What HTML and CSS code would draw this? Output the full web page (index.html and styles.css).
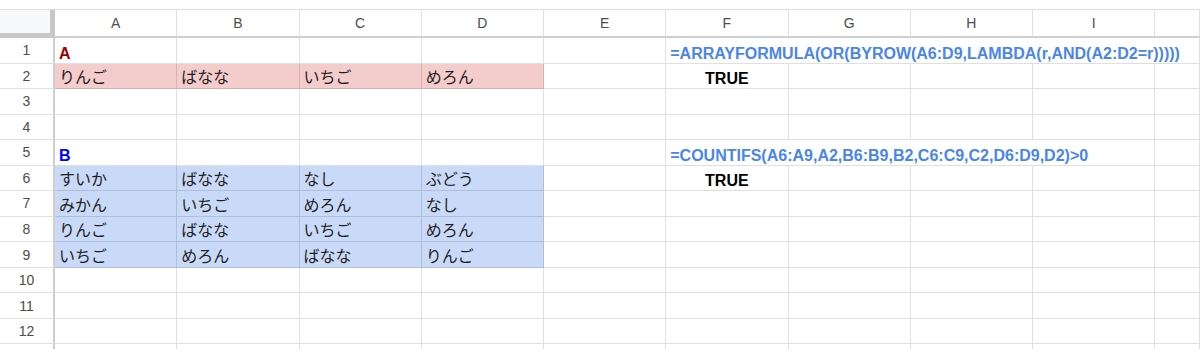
FILE: index.html
```html
<!DOCTYPE html>
<html lang="ja">
<head>
<meta charset="utf-8">
<title>Sheet</title>
<link rel="stylesheet" href="styles.css">
</head>
<body>
<div class="sheet">
  <div class="row head">
    <div class="corner"></div>
    <div class="col">A</div><div class="col">B</div><div class="col">C</div><div class="col">D</div><div class="col">E</div>
    <div class="col">F</div><div class="col">G</div><div class="col">H</div><div class="col">I</div><div class="col"></div>
  </div>
  <div class="row">
    <div class="num">1</div>
    <div class="cell"><span class="lbl red">A</span></div><div class="cell"></div><div class="cell"></div><div class="cell"></div><div class="cell"></div>
    <div class="cell span5"><span class="formula">=ARRAYFORMULA(OR(BYROW(A6:D9,LAMBDA(r,AND(A2:D2=r)))))</span></div>
  </div>
  <div class="row">
    <div class="num">2</div>
    <div class="cell pink">りんご</div><div class="cell pink">ばなな</div><div class="cell pink">いちご</div><div class="cell pink">めろん</div><div class="cell"></div>
    <div class="cell bool">TRUE</div><div class="cell"></div><div class="cell"></div><div class="cell"></div><div class="cell"></div>
  </div>
  <div class="row">
    <div class="num">3</div>
    <div class="cell"></div><div class="cell"></div><div class="cell"></div><div class="cell"></div><div class="cell"></div>
    <div class="cell"></div><div class="cell"></div><div class="cell"></div><div class="cell"></div><div class="cell"></div>
  </div>
  <div class="row">
    <div class="num">4</div>
    <div class="cell"></div><div class="cell"></div><div class="cell"></div><div class="cell"></div><div class="cell"></div>
    <div class="cell"></div><div class="cell"></div><div class="cell"></div><div class="cell"></div><div class="cell"></div>
  </div>
  <div class="row">
    <div class="num">5</div>
    <div class="cell"><span class="lbl blue">B</span></div><div class="cell"></div><div class="cell"></div><div class="cell"></div><div class="cell"></div>
    <div class="cell span4"><span class="formula">=COUNTIFS(A6:A9,A2,B6:B9,B2,C6:C9,C2,D6:D9,D2)&gt;0</span></div><div class="cell"></div>
  </div>
  <div class="row">
    <div class="num">6</div>
    <div class="cell blue-fill">すいか</div><div class="cell blue-fill">ばなな</div><div class="cell blue-fill">なし</div><div class="cell blue-fill">ぶどう</div><div class="cell"></div>
    <div class="cell bool">TRUE</div><div class="cell"></div><div class="cell"></div><div class="cell"></div><div class="cell"></div>
  </div>
  <div class="row">
    <div class="num">7</div>
    <div class="cell blue-fill">みかん</div><div class="cell blue-fill">いちご</div><div class="cell blue-fill">めろん</div><div class="cell blue-fill">なし</div><div class="cell"></div>
    <div class="cell"></div><div class="cell"></div><div class="cell"></div><div class="cell"></div><div class="cell"></div>
  </div>
  <div class="row">
    <div class="num">8</div>
    <div class="cell blue-fill">りんご</div><div class="cell blue-fill">ばなな</div><div class="cell blue-fill">いちご</div><div class="cell blue-fill">めろん</div><div class="cell"></div>
    <div class="cell"></div><div class="cell"></div><div class="cell"></div><div class="cell"></div><div class="cell"></div>
  </div>
  <div class="row">
    <div class="num">9</div>
    <div class="cell blue-fill">いちご</div><div class="cell blue-fill">めろん</div><div class="cell blue-fill">ばなな</div><div class="cell blue-fill">りんご</div><div class="cell"></div>
    <div class="cell"></div><div class="cell"></div><div class="cell"></div><div class="cell"></div><div class="cell"></div>
  </div>
  <div class="row">
    <div class="num">10</div>
    <div class="cell"></div><div class="cell"></div><div class="cell"></div><div class="cell"></div><div class="cell"></div>
    <div class="cell"></div><div class="cell"></div><div class="cell"></div><div class="cell"></div><div class="cell"></div>
  </div>
  <div class="row">
    <div class="num">11</div>
    <div class="cell"></div><div class="cell"></div><div class="cell"></div><div class="cell"></div><div class="cell"></div>
    <div class="cell"></div><div class="cell"></div><div class="cell"></div><div class="cell"></div><div class="cell"></div>
  </div>
  <div class="row">
    <div class="num">12</div>
    <div class="cell"></div><div class="cell"></div><div class="cell"></div><div class="cell"></div><div class="cell"></div>
    <div class="cell"></div><div class="cell"></div><div class="cell"></div><div class="cell"></div><div class="cell"></div>
  </div>
  <div class="row">
    <div class="num"></div>
    <div class="cell"></div><div class="cell"></div><div class="cell"></div><div class="cell"></div><div class="cell"></div>
    <div class="cell"></div><div class="cell"></div><div class="cell"></div><div class="cell"></div><div class="cell"></div>
  </div>
</div>
</body>
</html>
```

FILE: styles.css
```css
* { box-sizing: border-box; }

html, body {
  margin: 0;
  padding: 0;
  background: #ffffff;
  overflow: hidden;
}

.sheet {
  padding-top: 9px;
  width: 1200px;
  font-family: "Liberation Sans", "Noto Sans CJK JP", sans-serif;
}

.row {
  display: grid;
  grid-template-columns: 55px repeat(9, 122.25px) 1fr;
  height: 25.54px;
}

.row.head {
  height: 29px;
  border-top: 1px solid #dcdcdc;
}

.corner {
  background: #f8f9fa;
  border-right: 5px solid #c7c7c7;
  border-bottom: 5px solid #c7c7c7;
}

.col {
  display: flex;
  align-items: center;
  justify-content: center;
  font-size: 14px;
  color: #4d4d4d;
  border-right: 1px solid #e0e0e0;
  border-bottom: 2px solid #cfcfcf;
}

.num {
  display: flex;
  align-items: center;
  justify-content: center;
  font-size: 14px;
  color: #4d4d4d;
  border-right: 2px solid #cfcfcf;
  border-bottom: 1px solid #e0e0e0;
}

.cell {
  display: flex;
  align-items: flex-end;
  padding: 0 4px;
  font-size: 16px;
  color: #1f1f1f;
  white-space: nowrap;
  overflow: visible;
  border-right: 1px solid rgba(0, 0, 0, 0.12);
  border-bottom: 1px solid rgba(0, 0, 0, 0.12);
}

.pink { background: #f4cccc; }
.blue-fill { background: #c9daf8; }

.lbl {
  font-weight: bold;
  font-size: 16px;
}

.red { color: #990000; }
.blue { color: #0000ff; }

.span5 { grid-column: span 5; }
.span4 { grid-column: span 4; }

.formula {
  font-weight: bold;
  font-size: 16px;
  color: #4a86e8;
}

.bool {
  justify-content: center;
  font-weight: bold;
  color: #000000;
}
```
